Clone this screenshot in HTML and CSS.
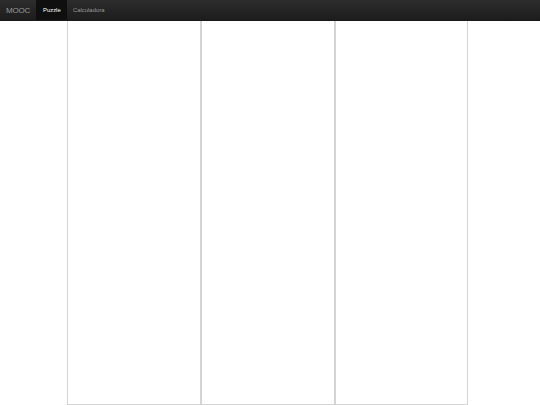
FILE: index.html
```html
<!DOCTYPE html>
<html>
<head>
<meta charset="utf-8">
<link rel="stylesheet" href="styles.css">
</head>
<body>
<div class="navbar">
  <a class="brand">MOOC</a>
  <a class="nav-item active">Puzzle</a>
  <a class="nav-item">Calculadora</a>
</div>
<div class="board">
  <div class="col"></div>
  <div class="col"></div>
  <div class="col"></div>
</div>
</body>
</html>
```
FILE: styles.css
```css
html, body {
  margin: 0;
  padding: 0;
  background: #fff;
  font-family: "Liberation Sans", Arial, sans-serif;
}
.navbar {
  height: 20px;
  display: flex;
  align-items: stretch;
  background: linear-gradient(#2d2d2d, #1c1c1c);
  border-bottom: 1px solid #1a1a1a;
  box-sizing: content-box;
}
.brand {
  display: flex;
  align-items: center;
  width: 36px;
  box-sizing: border-box;
  padding-left: 6px;
  font-size: 8px;
  letter-spacing: -0.2px;
  color: #999;
}
.nav-item {
  display: flex;
  align-items: center;
  padding: 0 6px 0 6px;
  font-size: 5.9px;
  color: #999;
}
.nav-item.active {
  background: #0f0f0f;
  color: #fff;
  width: 31px;
  box-sizing: border-box;
  padding-left: 7px;
}
.board {
  margin-left: 67px;
  width: 401px;
  height: 384px;
  display: grid;
  grid-template-columns: 134px 134px 133px;
}
.col {
  border: 1px solid #d4d4d4;
  border-top: none;
  box-sizing: border-box;
}
```
